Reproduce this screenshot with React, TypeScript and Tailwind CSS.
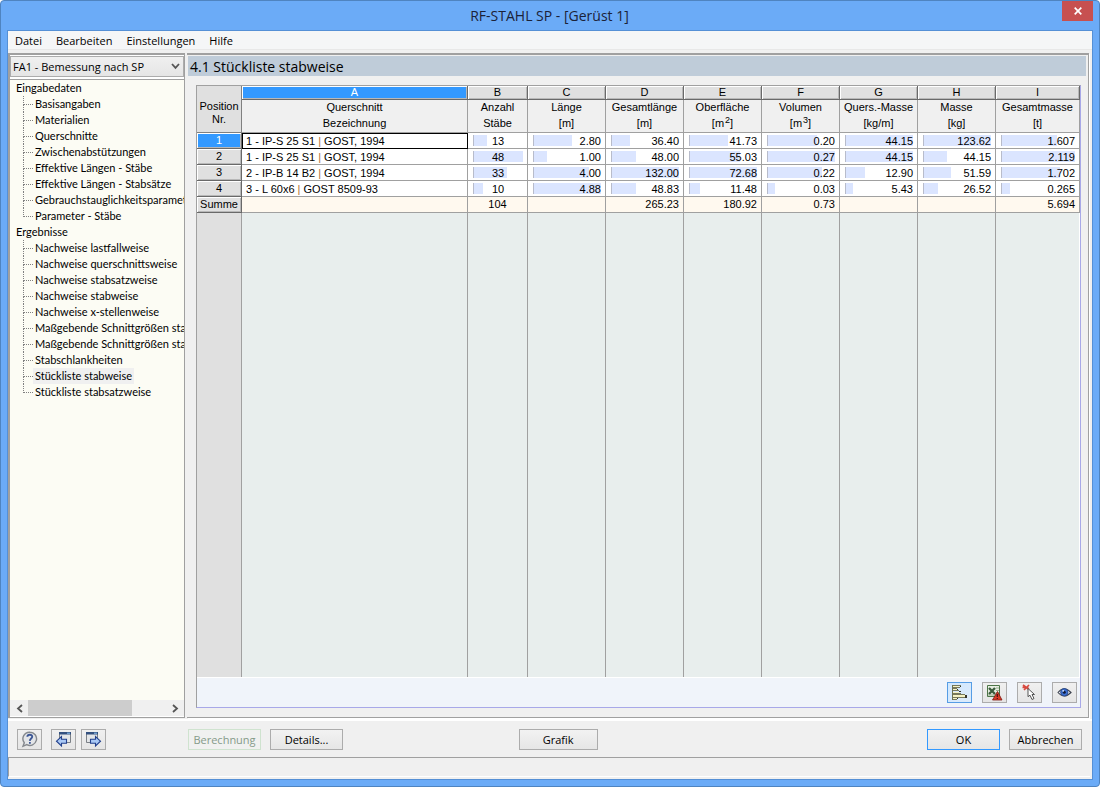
import type { ReactNode } from "react";
import clsx from "clsx";

type Column = {
  letter: string;
  title: string;
  unit: ReactNode;
  values: string[];
  total: string;
  centered?: boolean;
};

const sections = [
  {
    title: "Eingabedaten",
    items: [
      "Basisangaben",
      "Materialien",
      "Querschnitte",
      "Zwischenabstützungen",
      "Effektive Längen - Stäbe",
      "Effektive Längen - Stabsätze",
      "Gebrauchstauglichkeitsparamet",
      "Parameter - Stäbe",
    ],
  },
  {
    title: "Ergebnisse",
    items: [
      "Nachweise lastfallweise",
      "Nachweise querschnittsweise",
      "Nachweise stabsatzweise",
      "Nachweise stabweise",
      "Nachweise x-stellenweise",
      "Maßgebende Schnittgrößen sta",
      "Maßgebende Schnittgrößen sta",
      "Stabschlankheiten",
      "Stückliste stabweise",
      "Stückliste stabsatzweise",
    ],
  },
];

const profiles = [
  ["1 - IP-S 25 S1", "GOST, 1994"],
  ["1 - IP-S 25 S1", "GOST, 1994"],
  ["2 - IP-B 14 B2", "GOST, 1994"],
  ["3 - L 60x6", "GOST 8509-93"],
];

const columns: Column[] = [
  { letter: "B", title: "Anzahl", unit: "Stäbe", values: ["13", "48", "33", "10"], total: "104", centered: true },
  { letter: "C", title: "Länge", unit: "[m]", values: ["2.80", "1.00", "4.00", "4.88"], total: "" },
  { letter: "D", title: "Gesamtlänge", unit: "[m]", values: ["36.40", "48.00", "132.00", "48.83"], total: "265.23" },
  { letter: "E", title: "Oberfläche", unit: <Power exp="2" />, values: ["41.73", "55.03", "72.68", "11.48"], total: "180.92" },
  { letter: "F", title: "Volumen", unit: <Power exp="3" />, values: ["0.20", "0.27", "0.22", "0.03"], total: "0.73" },
  { letter: "G", title: "Quers.-Masse", unit: "[kg/m]", values: ["44.15", "44.15", "12.90", "5.43"], total: "" },
  { letter: "H", title: "Masse", unit: "[kg]", values: ["123.62", "44.15", "51.59", "26.52"], total: "" },
  { letter: "I", title: "Gesamtmasse", unit: "[t]", values: ["1.607", "2.119", "1.702", "0.265"], total: "5.694" },
];

function Power({ exp }: { exp: string }) {
  return (
    <>
      [m<sup className="ml-px text-[9px]">{exp}</sup>]
    </>
  );
}

function TreeItem({ label, last, active }: { label: string; last: boolean; active: boolean }) {
  return (
    <li className="flex h-4">
      <span className="ml-[13px] w-2.5 shrink-0">
        <span className="block h-[9px] border-b border-l border-dotted border-[#808080]" />
        {!last && <span className="block h-[7px] border-l border-dotted border-[#808080]" />}
      </span>
      <a
        href="#"
        className={clsx("whitespace-nowrap pl-0.5 leading-4", active && "bg-[#f0f0f0] pr-0.5")}
      >
        {label}
      </a>
    </li>
  );
}

function Sidebar() {
  return (
    <aside className="flex w-[177px] shrink-0 flex-col border-b border-l-2 border-r border-t-2 border-[#a0a0a0] bg-white pt-px">
      <div className="relative flex">
        <select
          aria-label="Bemessungsfall"
          className="h-[21px] w-full appearance-none border border-[#acacac] bg-linear-to-b from-[#f0f0f0] to-[#e5e5e5] pl-[2px] font-['Open_Sans',sans-serif] text-[11px] leading-[18px]"
        >
          <option>FA1 - Bemessung nach SP</option>
        </select>
        <svg className="pointer-events-none absolute right-1 top-[7px]" width="9" height="7" viewBox="0 0 9 7">
          <path d="M1 1l3.5 3.8L8 1" fill="none" stroke="#555" strokeWidth="1.8" />
        </svg>
      </div>
      <nav className="mt-0.5 min-h-0 grow overflow-hidden border-t border-[#a0a0a0] bg-[#fcfcf4] font-[Lato,sans-serif] text-[11px]">
        {sections.map((section) => (
          <div key={section.title}>
            <h2 className="h-4 pl-1.5 leading-4">{section.title}</h2>
            <ul>
              {section.items.map((item, i) => (
                <TreeItem
                  key={i}
                  label={item}
                  last={i === section.items.length - 1}
                  active={item === "Stückliste stabweise"}
                />
              ))}
            </ul>
          </div>
        ))}
      </nav>
      <div className="mb-px flex h-4 shrink-0 bg-[#f0f0f0]">
        <button aria-label="Nach links" className="flex w-[18px] items-center justify-center">
          <svg width="7" height="9" viewBox="0 0 7 9">
            <path d="M6 1L2 4.5 6 8" fill="none" stroke="#555" strokeWidth="1.8" />
          </svg>
        </button>
        <div className="flex grow">
          <div className="w-3/4 bg-[#cdcdcd]" />
        </div>
        <button aria-label="Nach rechts" className="flex w-[18px] items-center justify-center">
          <svg width="7" height="9" viewBox="0 0 7 9">
            <path d="M1 1l4 3.5L1 8" fill="none" stroke="#555" strokeWidth="1.8" />
          </svg>
        </button>
      </div>
    </aside>
  );
}

function ValueCell({ column, row }: { column: Column; row: number }) {
  const max = Math.max(...column.values.map(Number));
  const share = (Number(column.values[row]) / max) * 100;
  return (
    <td className="border-b border-r border-[#a0a0a0] bg-white p-0">
      <div className="grid h-[15px] pl-[5px] pr-1">
        <div className="col-start-1 row-start-1 py-0.5">
          <div className="h-[11px] border-l border-[#b8bccb] bg-[#dbe5ff]" style={{ width: `${share}%` }} />
        </div>
        <span
          className={clsx(
            "col-start-1 row-start-1 leading-4",
            column.centered ? "text-center" : "text-right",
          )}
        >
          {column.values[row]}
        </span>
      </div>
    </td>
  );
}

const letterCell =
  "h-[14px] border-b border-r border-[#696969] p-0 text-center font-normal leading-[13px] shadow-[inset_1px_1px_0_white,inset_-1px_-1px_0_#b8b8b8]";
const rowHead =
  "h-4 border-b border-r border-[#696969] p-0 text-center font-normal leading-[15px] shadow-[inset_1px_1px_0_white,inset_-1px_-1px_0_#b8b8b8]";
const captionCell = "h-[33px] border-b border-r border-[#a0a0a0] p-0 text-center font-normal leading-[15px]";

function PartsTable() {
  return (
    <table className="w-full table-fixed border-separate border-spacing-0 font-['Liberation_Sans',Arial,sans-serif] text-[11px]">
      <colgroup>
        <col className="w-[45px]" />
        <col />
        <col className="w-[60px]" />
        <col className="w-[78px]" />
        <col className="w-[78px]" />
        <col className="w-[78px]" />
        <col className="w-[78px]" />
        <col className="w-[78px]" />
        <col className="w-[78px]" />
        <col className="w-[84px]" />
      </colgroup>
      <thead>
        <tr>
          <th
            rowSpan={2}
            className="border-b border-r border-[#808080] bg-[#e0e0e0] p-0 pt-2 text-center font-normal leading-[13px]"
          >
            Position
            <br />
            Nr.
          </th>
          <th className={clsx(letterCell, "bg-[#3399ff] text-white")}>A</th>
          {columns.map((c) => (
            <th key={c.letter} className={clsx(letterCell, "bg-[#e0e0e0]")}>
              {c.letter}
            </th>
          ))}
        </tr>
        <tr>
          <th className={captionCell}>
            <div className="h-4">Querschnitt</div>
            <div className="h-4">Bezeichnung</div>
          </th>
          {columns.map((c) => (
            <th key={c.letter} className={captionCell}>
              <div className="h-4">{c.title}</div>
              <div className="h-4">{c.unit}</div>
            </th>
          ))}
        </tr>
      </thead>
      <tbody>
        {profiles.map(([name, norm], row) => (
          <tr key={row}>
            <th scope="row" className={clsx(rowHead, row === 0 ? "bg-[#3399ff] text-white" : "bg-[#e0e0e0]")}>
              {row + 1}
            </th>
            <td
              className={clsx(
                "border-b border-r border-[#a0a0a0] bg-white p-0 pl-1",
                row === 0 && "outline outline-1 -outline-offset-1 outline-black",
              )}
            >
              <div className="h-[15px] leading-4">
                {name} <span className="text-[#b07030]">|</span> {norm}
              </div>
            </td>
            {columns.map((c) => (
              <ValueCell key={c.letter} column={c} row={row} />
            ))}
          </tr>
        ))}
        <tr>
          <th scope="row" className={clsx(rowHead, "bg-[#e0e0e0]")}>
            Summe
          </th>
          <td className="border-b border-r border-[#a0a0a0] bg-[#fff9ef] p-0" />
          {columns.map((c) => (
            <td
              key={c.letter}
              className={clsx(
                "border-b border-r border-[#a0a0a0] bg-[#fff9ef] p-0 leading-[15px]",
                c.centered ? "text-center" : "pr-1 text-right",
              )}
            >
              {c.total}
            </td>
          ))}
        </tr>
      </tbody>
    </table>
  );
}

function IconButton({ label, active, children }: { label: string; active?: boolean; children: ReactNode }) {
  return (
    <button
      aria-label={label}
      className={clsx(
        "flex h-[21px] w-[25px] items-center justify-center border",
        active
          ? "border-[#569de5] bg-linear-to-br from-[#d0e8ff] to-[#dceafa]"
          : "border-[#acacac] bg-linear-to-b from-[#f0f0f0] to-[#e5e5e5]",
      )}
    >
      {children}
    </button>
  );
}

function BarsIcon() {
  return (
    <svg width="17" height="17" viewBox="0 0 17 17" shapeRendering="crispEdges">
      <path d="M1 1h1v15H1z" fill="#6b7050" />
      <path d="M2 2h6v1H2zM2 5h4v1H2zM2 8h6v1H2zM2 11h13v2H2zM2 14h4v1H2z" fill="#f4f2c4" />
      <path d="M2 1h8v1H2zM2 3h7v1H2zM2 4h4v1H2zM2 6h6v1H2zM2 9h8v1H2zM2 10h12v1H2zM2 13h14v1H2zM2 15h4v1H2z" fill="#77795c" />
      <path d="M9 2h1v1H9zM6 5h1v1H6zM8 7h2v1H8zM14 11h2v3h-2zM6 14h1v1H6z" fill="#33352e" />
    </svg>
  );
}

function ExcelIcon() {
  return (
    <svg width="17" height="17" viewBox="0 0 17 17">
      <path d="M1.5 1.5h12v11h-12z" fill="#e7eee2" stroke="#4d7548" />
      <path d="M10 4h3M10 6.5h3M10 9h3M2 11h8" stroke="#93aa8c" />
      <path d="M3 4l6 6M9 4l-6 6" stroke="#3a5c3c" strokeWidth="2.4" />
      <path d="M11.5 7.5L16 16H6.5z" fill="#d83a26" stroke="#7d1712" strokeWidth=".8" />
      <path d="M11.3 10v3M11.3 14v1" stroke="#411" strokeWidth="1.2" />
    </svg>
  );
}

function PickIcon() {
  return (
    <svg width="17" height="17" viewBox="0 0 17 17">
      <path d="M2 1l6 4.5M8 1L3 6M1.5 3.3h6" stroke="#d84a40" strokeWidth="1.7" />
      <path
        d="M7 4.5v8.2l2-1.5 2 4.3 2-1-2-4h2.5z"
        fill="#fff"
        stroke="#555"
        strokeLinejoin="round"
      />
    </svg>
  );
}

function EyeIcon() {
  return (
    <svg width="15" height="13" viewBox="0 0 15 13">
      <path d="M1 6.5Q7-.8 14 6.5 7 13.5 1 6.5z" fill="#f3f5fa" stroke="#3d4350" strokeWidth="1.1" />
      <circle cx="7.3" cy="6.3" r="3.7" fill="#3c6fd2" stroke="#254281" strokeWidth=".8" />
      <circle cx="7.3" cy="6.3" r="1.5" fill="#101a38" />
      <circle cx="6.2" cy="4.8" r=".9" fill="#dce8ff" />
    </svg>
  );
}

function HelpIcon() {
  return (
    <svg width="17" height="17" viewBox="0 0 17 17">
      <path
        d="M9 1.2a6.6 6.6 0 1 1-3.2 12.4L2 15.3l1.3-3.5A6.6 6.6 0 0 1 9 1.2z"
        fill="#e3e5e8"
        stroke="#85898e"
        strokeWidth="1.4"
      />
      <path d="M6.3 5.8C6.5 3 11.4 3 11.2 5.8c-.1 1.7-2.2 1.7-2.4 4" fill="none" stroke="#3d5796" strokeWidth="1.9" />
      <path d="M8 11h1.8v1.7H8z" fill="#3d5796" />
    </svg>
  );
}

function TableArrowIcon({ next }: { next?: boolean }) {
  return (
    <svg width="17" height="17" viewBox="0 0 17 17">
      <path d={next ? "M1.5 1.5h11v10h-11z" : "M4.5 1.5h11v10h-11z"} fill="#e4e6e8" stroke="#7c8187" />
      <path d={next ? "M1 1h12v2.5H1z" : "M4 1h12v2.5H4z"} fill="#34517f" />
      <path d={next ? "M9 2.2h3" : "M12 2.2h3"} stroke="#8ec2f2" />
      <path
        d={
          next
            ? "M5.5 8.2h5V5.5l5 4.7-5 4.8v-2.8h-5z"
            : "M11.5 8.2h-5V5.5l-5 4.7 5 4.8v-2.8h5z"
        }
        fill="#a9c8f5"
        stroke="#22408c"
        strokeWidth="1.1"
      />
    </svg>
  );
}

const pushButton =
  "h-[21px] border bg-linear-to-b from-[#f2f2f2] to-[#e6e6e6] text-center leading-[18px]";

function Results() {
  return (
    <main className="ml-0.5 mr-[3px] flex min-w-0 grow flex-col border-b border-r border-t-2 border-[#a0a0a0] pl-px shadow-[1px_1px_0_white]">
      <h1 className="mr-0.5 mt-px h-5 bg-[#bfccd9] pl-0.5 font-['Open_Sans',sans-serif] text-[14px] leading-[21px]">
        4.1 Stückliste stabweise
      </h1>
      <div className="mb-[9px] ml-2 mr-[7px] mt-[9px] flex min-h-0 grow flex-col border border-b-[#a8a8e8] border-l-[#a0a0a0] border-r-[#a8a8e8] border-t-[#a0a0a0] bg-[#f0f0f0]">
        <PartsTable />
        <div
          aria-hidden="true"
          className="grid grow grid-cols-[45px_1fr_60px_repeat(6,78px)_84px] bg-[#e8eeed]"
        >
          <div className="border-r border-[#a0a0a0] bg-[#e0e0e0]" />
          <div className="border-r border-[#a0a0a0]" />
          {columns.map((c) => (
            <div key={c.letter} className="border-r border-[#a0a0a0] last:border-r-white" />
          ))}
        </div>
        <div className="flex h-[30px] items-start justify-end gap-2.5 border-t border-white bg-[#f0f4fa] pr-[3px] pt-1">
          <IconButton label="Relationsbalken" active>
            <BarsIcon />
          </IconButton>
          <IconButton label="Export nach Excel">
            <ExcelIcon />
          </IconButton>
          <IconButton label="Stab auswählen">
            <PickIcon />
          </IconButton>
          <IconButton label="Ansichtsmodus">
            <EyeIcon />
          </IconButton>
        </div>
      </div>
    </main>
  );
}

export default function App() {
  return (
    <div className="flex h-screen min-h-[560px] flex-col rounded-[4px] border border-[#4f84c0] bg-[#6babf7] font-['Open_Sans',sans-serif] text-black">
      <header className="flex h-[29px] shrink-0 pl-9 pr-1.5">
        <div className="grow pt-1 text-center text-[14px] leading-[22px] text-[#1b2238]">
          RF-STAHL SP - [Gerüst 1]
        </div>
        <button
          aria-label="Schließen"
          className="flex h-5 w-[31px] items-center justify-center bg-[#c75050]"
        >
          <svg width="8" height="8" viewBox="0 0 8 8">
            <path d="M.7.7l6.6 6.6M7.3.7L.7 7.3" stroke="#fff" strokeWidth="1.7" />
          </svg>
        </button>
      </header>

      <div className="mx-1.5 mb-1.5 flex min-h-0 grow flex-col border border-[#5590d6] bg-[#f0f0f0]">
        <nav className="flex h-[19px] shrink-0 gap-3.5 border-b border-[#e8e8e8] bg-[#f5f6f7] pl-[7px] text-[11px] leading-5">
          <button>Datei</button>
          <button>Bearbeiten</button>
          <button>Einstellungen</button>
          <button>Hilfe</button>
        </nav>

        <div className="mt-[3px] flex min-h-0 grow">
          <Sidebar />
          <Results />
        </div>

        <div className="mt-px flex h-[39px] shrink-0 border-b border-t-2 border-b-[#a0a0a0] border-t-white pl-[9px] pr-2.5 pt-2 text-[11px]">
          <IconButton label="Hilfe">
            <HelpIcon />
          </IconButton>
          <div className="ml-[9px] flex gap-[5px]">
            <IconButton label="Vorherige Maske">
              <TableArrowIcon />
            </IconButton>
            <IconButton label="Nächste Maske">
              <TableArrowIcon next />
            </IconButton>
          </div>
          <button
            disabled
            className="ml-[82px] h-[21px] w-[73px] border border-[#cfe3cf] bg-[#f0f1f0] leading-[18px] text-[#859a89]"
          >
            Berechnung
          </button>
          <button className={clsx(pushButton, "ml-[9px] w-[73px] border-[#acacac]")}>Details...</button>
          <div className="grow-[8]" />
          <button className={clsx(pushButton, "w-[79px] border-[#acacac]")}>Grafik</button>
          <div className="grow-[15]" />
          <button className={clsx(pushButton, "w-[73px] border-[#3399ff]")}>OK</button>
          <button className={clsx(pushButton, "ml-[9px] w-[73px] border-[#acacac]")}>Abbrechen</button>
        </div>
        <footer className="mb-0.5 mr-0.5 h-[19px] shrink-0 border-b border-l border-b-white border-l-[#a0a0a0]" />
      </div>
    </div>
  );
}
